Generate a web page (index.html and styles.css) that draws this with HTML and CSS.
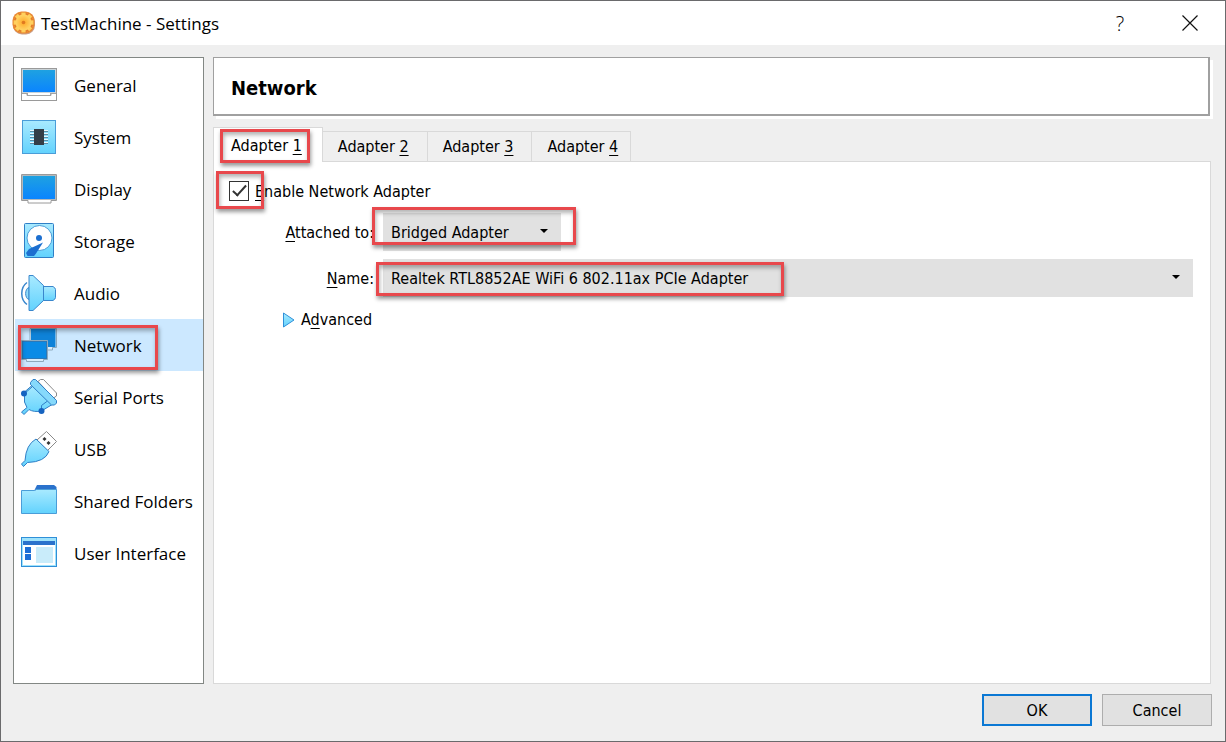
FILE: index.html
```html
<!DOCTYPE html>
<html lang="en">
<head>
    <meta charset="UTF-8">
    <meta name="viewport" content="width=device-width, initial-scale=1.0">
    <title>TestMachine - Settings</title>

    <link rel="stylesheet" href="styles.css">
</head>
<body>
    <svg class="defs" width="0" height="0" aria-hidden="true">
        <defs>
            <linearGradient id="screen" x1="0" y1="0" x2="0" y2="1">
                <stop offset="0" stop-color="#1fa2e0"/>
                <stop offset="1" stop-color="#0a84ff"/>
            </linearGradient>
            <linearGradient id="light" x1="0" y1="0" x2="0" y2="1">
                <stop offset="0" stop-color="#a9eaff"/>
                <stop offset="1" stop-color="#62d2fd"/>
            </linearGradient>
            <radialGradient id="orange">
                <stop offset="0" stop-color="#ffa928"/>
                <stop offset="1" stop-color="#ffd567"/>
            </radialGradient>
        </defs>
    </svg>

    <div class="window">
        <header class="titlebar">
            <svg class="gear" viewBox="0 0 24 24" aria-hidden="true">
                <rect x="1" y="1.500" width="22" height="22" rx="9" fill="#c9a08a"/>
                <rect x=".5" y=".5" width="22" height="22" rx="9" fill="#ea8a35"/>
                <g stroke="#d9671b" stroke-width="5.500">
                    <path d="M11.500 1.500v20M1.500 11.500h20M4.500 4.500l14 14M18.500 4.500l-14 14"/>
                </g>
                <g stroke="#ffcf5c" stroke-width="4.400">
                    <path d="M11.500 1.500v20M1.500 11.500h20M4.300 4.300l14.400 14.400M18.700 4.300L4.300 18.700"/>
                </g>
                <circle cx="11.500" cy="11.500" r="8" fill="url(#orange)"/>
                <circle cx="11.500" cy="11.500" r="1.800" fill="#e07a20"/>
            </svg>
            <h1>TestMachine - Settings</h1>
            <button class="title-btn" type="button" aria-label="Help">?</button>
            <button class="title-btn" type="button" aria-label="Close">
                <svg width="16" height="16" viewBox="0 0 16 16"><path d="M.5.5l15 15M15.5.5l-15 15" stroke="#111" stroke-width="1.2"/></svg>
            </button>
        </header>

        <div class="content">
            <nav class="sidebar">
                <ul>
                    <li><a href="#general">
                        <svg viewBox="0 0 36 36">
                            <rect x=".5" y="1.500" width="35" height="32" fill="#fff" stroke="#9a9a9a"/>
                            <rect x="1.500" y="2.500" width="33" height="23" fill="url(#screen)" stroke="#c9d3d8"/>
                            <path d="M1 26.500h5v2h24v-2h5M6.500 26v2.500h23v-2.500" fill="none" stroke="#a3a3a3"/>
                        </svg>General</a></li>
                    <li><a href="#system">
                        <svg viewBox="0 0 36 36">
                            <rect x="1.500" y="1.500" width="33" height="33" fill="url(#light)" stroke="#4a9dd8"/>
                            <path d="M9 11.500h18M9 14.500h18M9 17.500h18M9 20.500h18M9 23.500h18" stroke="#e9f8ff"/>
                            <path d="M9 12.500h18M9 15.500h18M9 18.500h18M9 21.500h18M9 24.500h18" stroke="#5c8ea8"/>
                            <rect x="13" y="10" width="10" height="16" fill="#343d47"/>
                        </svg>System</a></li>
                    <li><a href="#display">
                        <svg viewBox="0 0 36 36">
                            <path d="M.5 3.500h35v26h-5.500v2.500h-23v-2.500H.5z" fill="#fff" stroke="#9a9a9a"/>
                            <rect x="1.500" y="4.500" width="33" height="24" fill="url(#screen)" stroke="#b3b9bd"/>
                        </svg>Display</a></li>
                    <li><a href="#storage">
                        <svg viewBox="0 0 36 36">
                            <rect x="3.500" y=".5" width="29" height="34" rx="1" fill="url(#light)" stroke="#2f7fc6"/>
                            <circle cx="18.500" cy="15" r="12.500" fill="#fff" stroke="#4a9dd8"/>
                            <path d="M22 19.500L15 30.500l-2 2.500H6.500l-1.500-3 3-4z" fill="#1c6fd0"/>
                            <circle cx="18" cy="15" r="3" fill="#1c6fd0"/>
                        </svg>Storage</a></li>
                    <li><a href="#audio">
                        <svg viewBox="0 0 36 36">
                            <path d="M6 7.500c-7 5-7 17 0 22" fill="none" stroke="#3a86cc" stroke-width="1.500"/>
                            <path d="M8 12.500c-4.500 1-4.500 11 0 12z" fill="#8fdcfb" stroke="#3a86cc"/>
                            <path d="M22 11.500h10q2.500 1.500 2.500 3v8q0 1.500-2.500 3H22z" fill="url(#light)" stroke="#3a86cc"/>
                            <path d="M8 .5h4L22.500 10.500v15L12 35.500H8z" fill="url(#light)" stroke="#3a86cc"/>
                        </svg>Audio</a></li>
                    <li class="marked"><a class="active" href="#network">
                        <svg viewBox="0 0 36 36">
                            <path d="M9 1.500h26.500v19h-4v2.500H9z" fill="#d9edfb" stroke="#8da9bd"/>
                            <rect x="10" y="2" width="24.500" height="18" fill="#0e82d8"/>
                            <path d="M.5 13.500h26v19h-4v2h-17v-2h-5z" fill="#d9edfb" stroke="#8da9bd"/>
                            <rect x="1.500" y="14.500" width="24" height="17" fill="#0a8be6" stroke="#2b78b8"/>
                        </svg>Network</a></li>
                    <li><a href="#serial">
                        <svg viewBox="0 0 36 36">
                            <path d="M17 2.500l2.500-2h3L35.500 14v3l-3 2z" fill="#fff" stroke="#8a8a8a"/>
                            <path d="M11 6.500L3.500 13v10l2.500 5.500L.5 33l2.500 2.500 5-5q5 3 12.500 1.500L32 25z" fill="url(#light)" stroke="#2f7fc6"/>
                            <path d="M3.500 14.500L11 8M20.500 31v-4.500l6-4.500" fill="none" stroke="#2f7fc6"/>
                            <path d="M9.500 3.500l2.500-3h2.500L35.500 21.500v2.500l-2 2h-3L9.500 5.500z" fill="#86d9fb" stroke="#2f7fc6"/>
                            <circle cx="3" cy="14.500" r="3" fill="#1663c0"/>
                            <circle cx="20.500" cy="32" r="3" fill="#1663c0"/>
                        </svg>Serial Ports</a></li>
                    <li><a href="#usb">
                        <svg viewBox="0 0 36 36">
                            <path d="M25.500 .5L35.500 10.500l-9 9L16 9z" fill="#fff" stroke="#8a8a8a"/>
                            <path d="M23.500 6l2 2-2 2-2-2zM27.500 10l2 2-2 2-2-2z" fill="#333"/>
                            <path d="M15 8l13 12.500Q24 31 6.500 31.500L2.500 35.500.5 33l3.500-3.500Q5 13.500 15 8z" fill="url(#light)" stroke="#2f7fc6"/>
                        </svg>USB</a></li>
                    <li><a href="#folders">
                        <svg viewBox="0 0 36 36">
                            <path d="M13 8l3-6h17l2.500 2v6H13z" fill="#2b72cc"/>
                            <path d="M.5 7.500h13l2-1h20v24H.5z" fill="url(#light)" stroke="#4a9dd8"/>
                        </svg>Shared Folders</a></li>
                    <li><a href="#interface">
                        <svg viewBox="0 0 36 36">
                            <rect x=".5" y="2.500" width="35" height="29" fill="#9fe3fc" stroke="#2f8fd8"/>
                            <rect x="2" y="6" width="32" height="4" fill="#2b72cc"/>
                            <rect x="2" y="10" width="32" height="20" fill="#fff"/>
                            <path d="M4 12h6v6H4zM4 19h6v6H4z" fill="#1f6fd6"/>
                            <rect x="15" y="12" width="17" height="16" fill="#c9ecfa"/>
                        </svg>User Interface</a></li>
                </ul>
            </nav>

            <main class="page">
                <h2>Network</h2>

                <div class="tabs" role="tablist">
                    <button class="tab selected" type="button" role="tab" aria-selected="true">Adapter <u>1</u></button>
                    <button class="tab" type="button" role="tab">Adapter <u>2</u></button>
                    <button class="tab" type="button" role="tab">Adapter <u>3</u></button>
                    <button class="tab" type="button" role="tab">Adapter <u>4</u></button>
                </div>

                <form class="panel">
                    <div class="enable">
                        <input type="checkbox" id="enable" checked>
                        <label for="enable"><u>E</u>nable Network Adapter</label>
                    </div>
                    <div class="fields">
                        <label for="attached"><u>A</u>ttached to:</label>
                        <div class="select short">
                            <select id="attached">
                                <option>Bridged Adapter</option>
                            </select>
                        </div>
                        <label for="name"><u>N</u>ame:</label>
                        <div class="select long">
                            <select id="name">
                                <option>Realtek RTL8852AE WiFi 6 802.11ax PCIe Adapter</option>
                            </select>
                        </div>
                    </div>
                    <button class="advanced" type="button">
                        <svg width="12" height="16" viewBox="0 0 12 16"><path d="M.5 1v14L11 8z" fill="url(#light)" stroke="#2f8fd8"/></svg>
                        <span>A<u>d</u>vanced</span>
                    </button>
                </form>
            </main>
        </div>

        <footer class="buttons">
            <button class="btn default" type="button">OK</button>
            <button class="btn" type="button">Cancel</button>
        </footer>
    </div>
</body>
</html>
```
FILE: styles.css
```css
*,
*::after,
*::before{
    box-sizing: border-box;
    margin: 0;
    padding: 0;
}
body{
    font-family: "DejaVu Sans Condensed", "Noto Sans", sans-serif;
    font-size: 16px;
    color: #000;
}
button, select, input{
    font: inherit;
    color: inherit;
}
u{
    text-underline-offset: 3px;
    text-decoration-thickness: 1px;
    text-decoration-skip-ink: none;
}
.defs{
    position: absolute;
}
.window{
    display: flex;
    flex-direction: column;
    min-height: 100vh;
    border: 1px solid #6a6a6c;
    background-color: #efefef;
}

/* title bar */
.titlebar{
    display: flex;
    align-items: center;
    height: 44px;
    padding-left: 11px;
    background-color: #fff;
    font-family: "Open Sans", sans-serif;
}
.titlebar h1{
    flex-grow: 1;
    padding-left: 5px;
    font-size: 17px;
    font-weight: 400;
}
.gear{
    width: 24px;
    height: 24px;
}
.title-btn{
    display: flex;
    align-items: center;
    justify-content: center;
    width: 70px;
    height: 44px;
    border: none;
    background: none;
    font-size: 20px;
    font-weight: 300;
}

/* list on the left */
.content{
    display: grid;
    grid-template-columns: 191px 1fr;
    gap: 9px;
    flex-grow: 1;
    padding: 12px 14px 0 12px;
}
.sidebar{
    padding: 1px 0 1px 1px;
    border: 1px solid #828784;
    background-color: #fff;
}
.sidebar ul{
    list-style-type: none;
}
.sidebar a{
    display: flex;
    align-items: center;
    gap: 17px;
    height: 52px;
    padding-left: 6px;
    font-family: "Open Sans", sans-serif;
    font-size: 17px;
    color: #000;
    text-decoration: none;
    white-space: nowrap;
}
.sidebar svg{
    flex-shrink: 0;
    width: 36px;
    height: 36px;
}
.sidebar .active{
    background-color: #cce8ff;
}

/* page on the right */
.page{
    display: flex;
    flex-direction: column;
    min-width: 0;
}
.page h2{
    height: 59px;
    margin-right: 1px;
    padding-left: 17px;
    border: 1px solid #a0a0a0;
    border-right-width: 2px;
    border-bottom-width: 2px;
    background-color: #fff;
    box-shadow: 3px 3px 0 #fff;
    font-size: 20px;
    line-height: 60px;
}
.tabs{
    display: flex;
    align-items: flex-end;
    margin-top: 11px;
}
.tab{
    position: relative;
    height: 31px;
    padding: 0 18px 0 15px;
    border: 1px solid #d9d9d9;
    border-left: none;
    background-color: #efefef;
    white-space: nowrap;
}
.tab:last-child{
    padding-right: 12px;
}
.tab.selected{
    height: 35px;
    padding-left: 17px;
    padding-right: 20px;
    border-left: 1px solid #d9d9d9;
    border-bottom: none;
    background-color: #fff;
    z-index: 1;
}
.panel{
    flex-grow: 1;
    margin-top: -1px;
    padding: 16px 17px 16px 15px;
    border: 1px solid #d9d9d9;
    background-color: #fff;
}
.enable{
    position: relative;
    display: flex;
    align-items: center;
    gap: 6px;
    height: 26px;
}
.enable input{
    appearance: none;
    width: 20px;
    height: 20px;
    border: 1px solid #333;
    background-color: #fff;
}
.enable input:checked::before{
    content: "";
    display: block;
    width: 7px;
    height: 14px;
    margin: 0 auto;
    border: solid #333;
    border-width: 0 2px 2px 0;
    transform: rotate(42deg);
}
.fields{
    display: grid;
    grid-template-columns: 145px 1fr;
    column-gap: 9px;
    row-gap: 8px;
    align-items: center;
    margin-top: 9px;
}
.fields label{
    text-align: right;
}
.select{
    position: relative;
}
.select select{
    display: block;
    appearance: none;
    width: 100%;
    height: 38px;
    padding-left: 8px;
    border: none;
    background-color: #e1e1e1;
}
.select::before{
    content: "";
    position: absolute;
    top: 16px;
    right: 13px;
    border: 4px solid transparent;
    border-top-color: #000;
    border-bottom: none;
}
.select.short{
    width: 178px;
}
.advanced{
    display: flex;
    align-items: center;
    gap: 6px;
    margin: 13px 0 0 54px;
    border: none;
    background: none;
}

/* red frames */
.marked{
    position: relative;
}
.marked::after,
.tab.selected::after,
.enable::after,
.select::after{
    content: "";
    position: absolute;
    border: 3px solid #e8484c;
    box-shadow: 1px 3px 4px rgba(0, 0, 0, .4), inset 1px 3px 4px rgba(0, 0, 0, .3);
    pointer-events: none;
    z-index: 2;
}
.marked::after{
    top: 6px;
    left: 3px;
    width: 140px;
    height: 45px;
}
.tab.selected::after{
    top: 1px;
    left: 6px;
    width: 90px;
    height: 34px;
}
.enable::after{
    top: -7px;
    left: -13px;
    width: 48px;
    height: 38px;
}
.select.short::after{
    top: -6px;
    left: -11px;
    width: 204px;
    height: 38px;
}
.select.long::after{
    top: 3px;
    left: -7px;
    width: 408px;
    height: 34px;
}

/* bottom buttons */
.buttons{
    display: flex;
    justify-content: flex-end;
    gap: 10px;
    padding: 10px 13px 15px;
}
.btn{
    width: 110px;
    height: 32px;
    border: 1px solid #adadad;
    background-color: #e1e1e1;
}
.btn.default{
    border: 2px solid #0b78d4;
}
```
